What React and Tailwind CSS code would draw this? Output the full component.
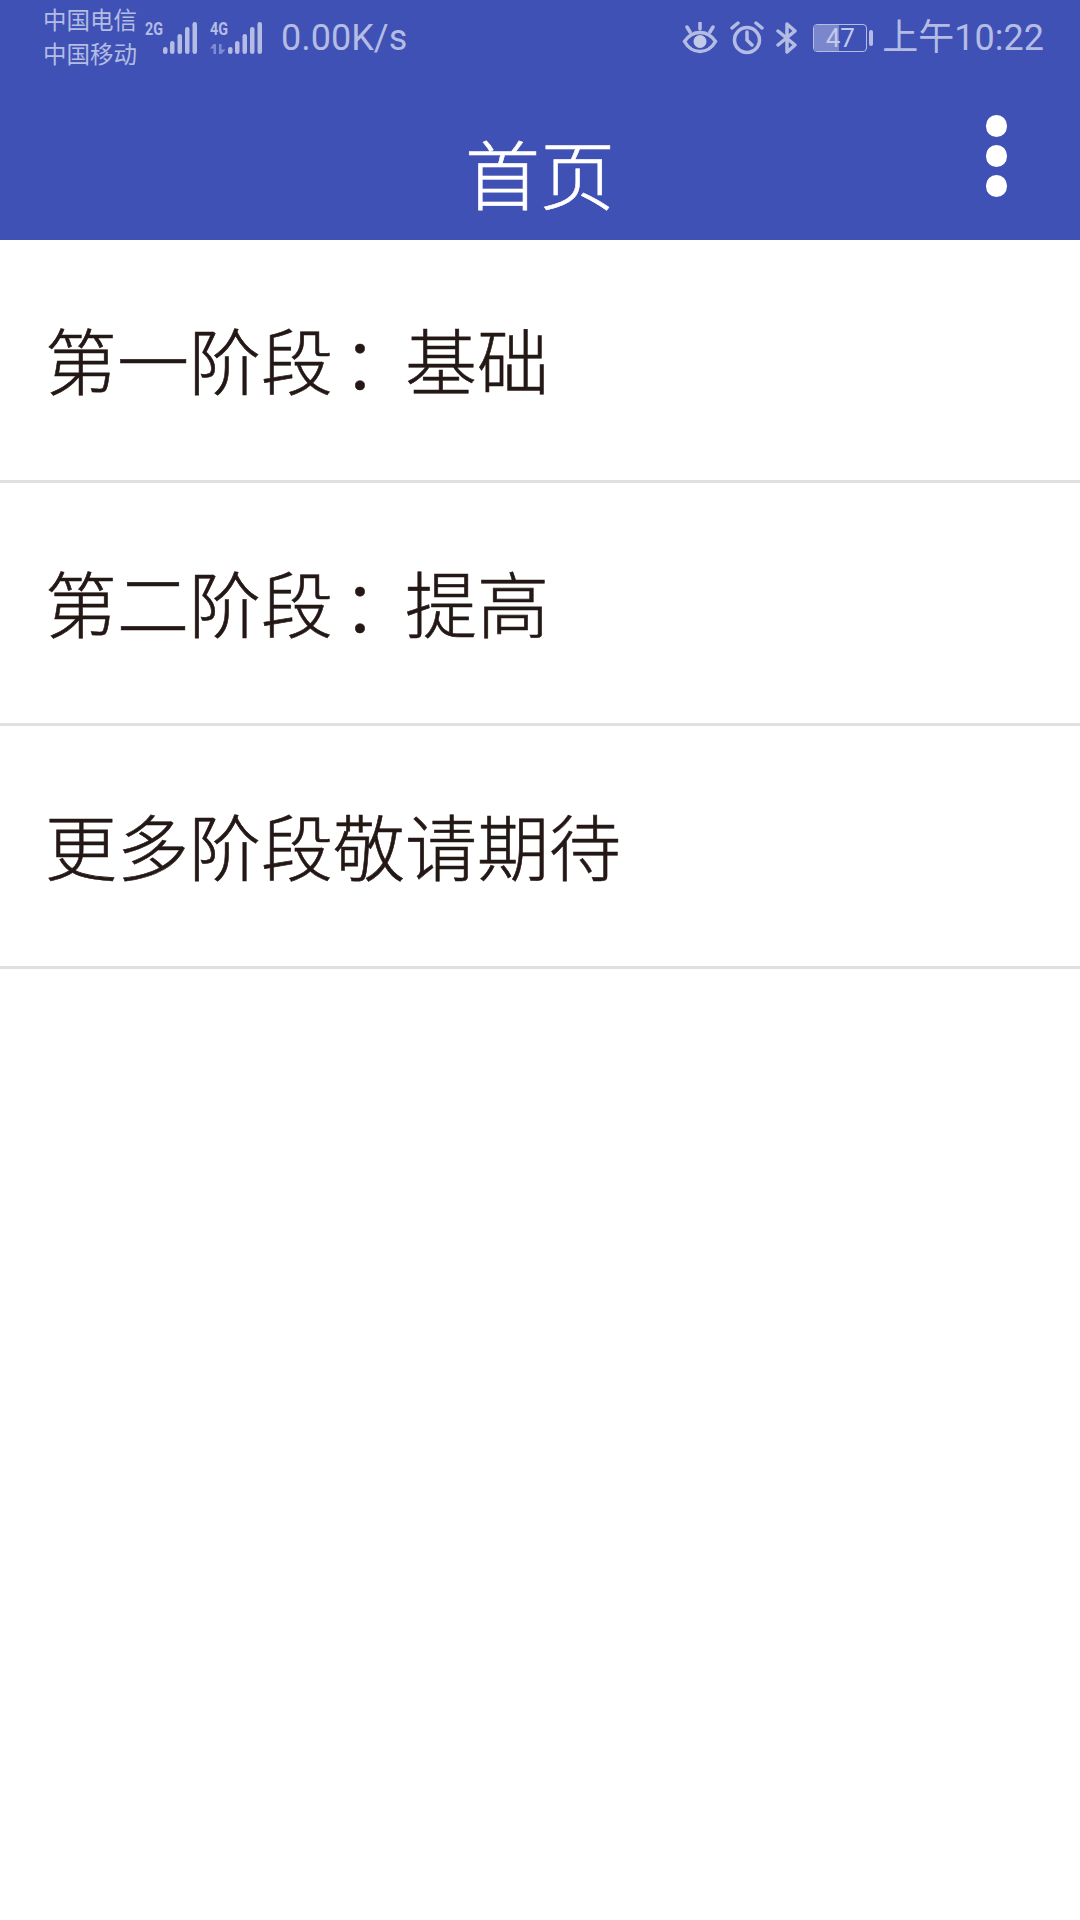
const cjk = "font-['Roboto','Noto_Sans_CJK_SC',sans-serif]";

function Signal({ label, arrows }) {
  return (
    <svg width="54" height="36" viewBox="0 0 54 36" fill="#b4bce4" className="block overflow-visible">
      <text x="0" y="15.500" fontFamily="Roboto" fontWeight="700" fontSize="19" textLength="18" lengthAdjust="spacingAndGlyphs">
        {label}
      </text>
      {arrows && (
        <path fill="#7f8bcf" d="M3.500 25v10h2.500v-10zM3.500 25l-3.500 4.500h3.500zM9 25v10h2.500v-10zM11.500 35l4-4.500h-4z" />
      )}
      <rect x="18" y="28" width="4.500" height="7" rx="2.200" />
      <rect x="25" y="22" width="4.500" height="13" rx="2.200" />
      <rect x="32.500" y="15" width="4.500" height="20" rx="2.200" />
      <rect x="40" y="8" width="4.500" height="27" rx="2.200" />
      <rect x="47.500" y="3" width="4.500" height="32" rx="2.200" />
    </svg>
  );
}

function Eye() {
  return (
    <svg width="36" height="32" viewBox="0 0 36 32" fill="none" stroke="#b4bce4" strokeWidth="3.500" className="block">
      <path d="M2.500 19.500c4-6 9-9 15.500-9s11.500 3 15.500 9c-4 7-9 10-15.500 10S6.500 26.500 2.500 19.500z" />
      <circle cx="18" cy="19.500" r="6.500" fill="#c3cae9" stroke="none" />
      <path d="M18 1v6M5 5l3 5M31 5l-3 5" strokeLinecap="round" />
    </svg>
  );
}

function Alarm() {
  return (
    <svg width="34" height="34" viewBox="0 0 34 34" fill="none" stroke="#b4bce4" strokeWidth="3.500" strokeLinecap="round" className="block">
      <circle cx="17" cy="19" r="12.500" />
      <path d="M17 11v8l5 5M2 7l6-5M32 7l-6-5" />
    </svg>
  );
}

function Bluetooth() {
  return (
    <svg width="22" height="32" viewBox="0 0 22 32" fill="none" stroke="#b4bce4" strokeWidth="3.500" strokeLinejoin="round" strokeLinecap="round" className="block">
      <path d="M2 9l17 14-8 7V2l8 7L2 23" />
    </svg>
  );
}

function Battery() {
  return (
    <div className="flex items-center gap-[2px]">
      <div className="relative h-[28px] w-[54px] rounded-[4px] border-[1.5px] border-[#b4bce4]">
        <div className="h-full w-[47%] rounded-l-[2px] bg-[#7b87cd]" />
        <span className="absolute inset-0 flex items-center justify-center text-[26px] leading-none text-[#c3cae9] font-['Roboto',sans-serif]">
          47
        </span>
      </div>
      <div className="h-[16px] w-[4px] rounded-[2px] bg-[#b4bce4]" />
    </div>
  );
}

function StatusBar() {
  return (
    <div className={`flex h-[76px] items-center justify-between pl-[43px] pr-[36px] text-[#b4bce4] ${cjk}`}>
      <div className="flex items-center">
        <div className="w-[102px] text-[23.500px] leading-[34px]">
          <div>中国电信</div>
          <div>中国移动</div>
        </div>
        <div className="mt-[-2px] flex gap-[11px]">
          <Signal label="2G" />
          <Signal label="4G" arrows />
        </div>
        <span className="ml-[17px] text-[36px] leading-none">0.00K/s</span>
      </div>
      <div className="flex items-center">
        <Eye />
        <div className="ml-[12px]"><Alarm /></div>
        <div className="ml-[12px]"><Bluetooth /></div>
        <div className="ml-[15px]"><Battery /></div>
        <span className="ml-[9px] text-[36px] leading-none">上午10:22</span>
      </div>
    </div>
  );
}

function Header() {
  return (
    <div className="grid h-[164px] grid-cols-[1fr_auto_1fr]">
      <div />
      <h1 className={`self-end pb-[24px] text-[75px] font-light leading-none text-white [-webkit-text-stroke:0.6px] ${cjk}`}>首页</h1>
      <div className="flex flex-col items-end gap-[8px] pr-[73px] pt-[39px]">
        <span className="h-[22px] w-[21px] rounded-full bg-white" />
        <span className="h-[22px] w-[21px] rounded-full bg-white" />
        <span className="h-[22px] w-[21px] rounded-full bg-white" />
      </div>
    </div>
  );
}

function Row({ children }) {
  return (
    <div className="flex h-[243px] items-center border-b-[3px] border-[#e0e0e0] pl-[45px] pt-[10px]">
      <span className={`whitespace-nowrap text-[72px] font-light leading-none text-[#231815] [-webkit-text-stroke:0.6px] ${cjk}`}>{children}</span>
    </div>
  );
}

// the colon sits further right in its cell than the SC glyph does
function Colon() {
  return <span className="inline-block pl-[9px] tracking-[-9px]">：</span>;
}

export default function App() {
  return (
    <div className="min-h-[1920px] w-[1080px] bg-white">
      <div className="bg-[#3f51b5]">
        <StatusBar />
        <Header />
      </div>
      <Row>第一阶段<Colon />基础</Row>
      <Row>第二阶段<Colon />提高</Row>
      <Row>更多阶段敬请期待</Row>
    </div>
  );
}
